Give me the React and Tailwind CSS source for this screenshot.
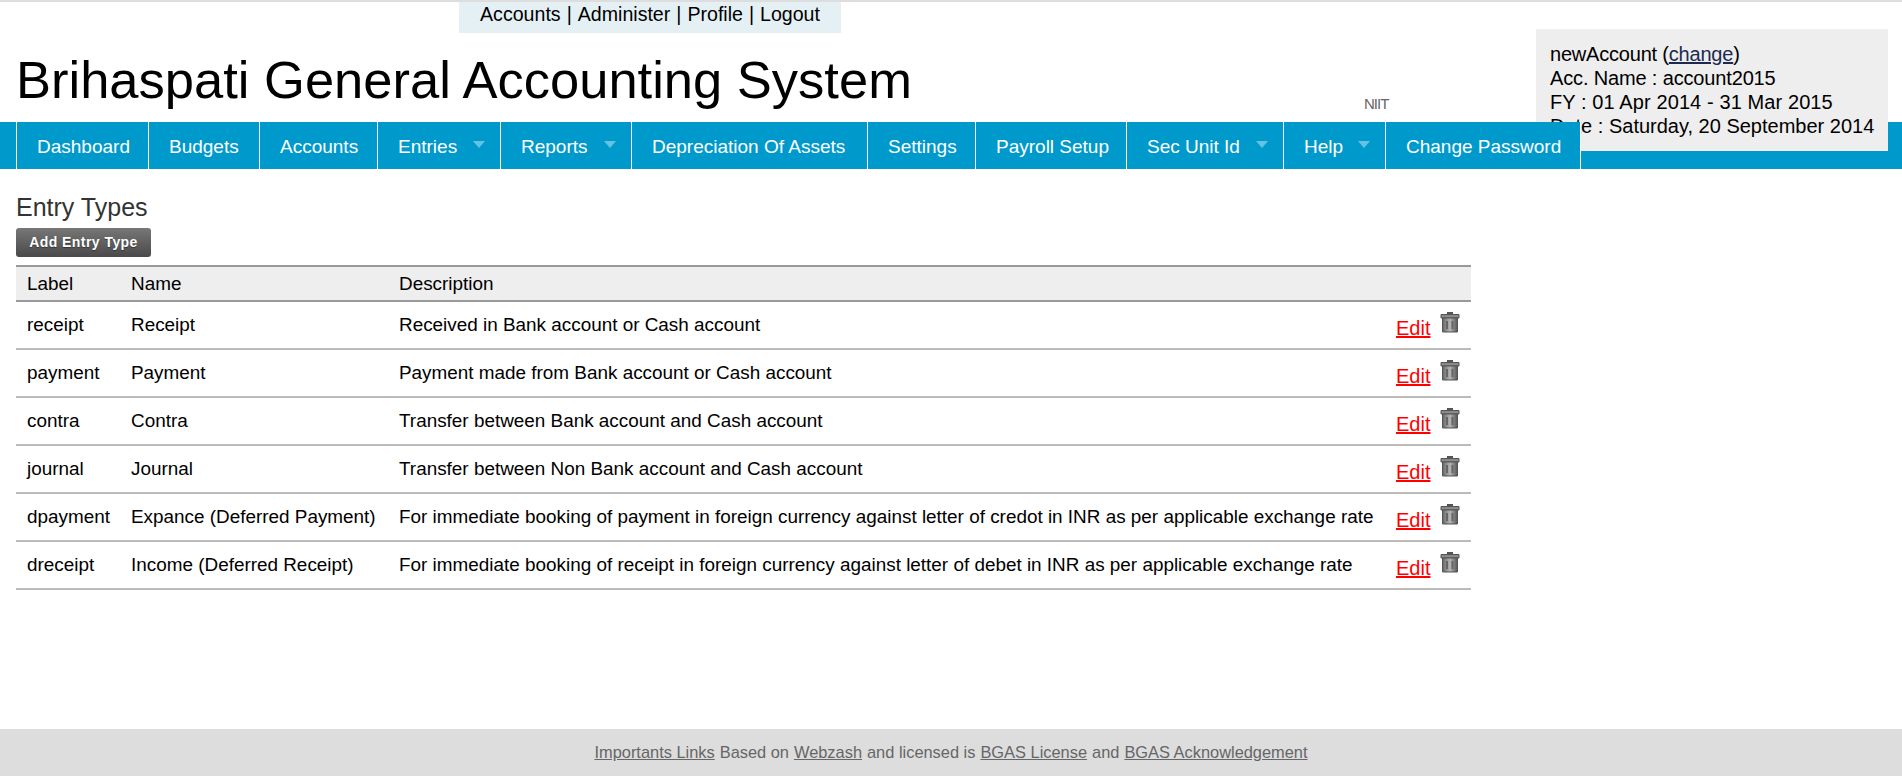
const topLinks = ["Accounts", "Administer", "Profile", "Logout"];

const navItems = [
  { label: "Dashboard", width: "w-[132px]" },
  { label: "Budgets", width: "w-[111px]" },
  { label: "Accounts", width: "w-[118px]" },
  { label: "Entries", width: "w-[123px]", arrow: true },
  { label: "Reports", width: "w-[131px]", arrow: true },
  { label: "Depreciation Of Assets", width: "w-[236px]" },
  { label: "Settings", width: "w-[108px]" },
  { label: "Payroll Setup", width: "w-[151px]" },
  { label: "Sec Unit Id", width: "w-[157px]", arrow: true },
  { label: "Help", width: "w-[102px]", arrow: true },
  { label: "Change Password", width: "w-[196px]" },
];

const entryTypes = [
  ["receipt", "Receipt", "Received in Bank account or Cash account"],
  ["payment", "Payment", "Payment made from Bank account or Cash account"],
  ["contra", "Contra", "Transfer between Bank account and Cash account"],
  ["journal", "Journal", "Transfer between Non Bank account and Cash account"],
  ["dpayment", "Expance (Deferred Payment)", "For immediate booking of payment in foreign currency against letter of credot in INR as per applicable exchange rate"],
  ["dreceipt", "Income (Deferred Receipt)", "For immediate booking of receipt in foreign currency against letter of debet in INR as per applicable exchange rate"],
];

function TrashIcon() {
  return (
    <svg width="20" height="22" viewBox="0 0 20 22" className="block">
      <defs>
        <linearGradient id="trashBody" x1="0" x2="1" y1="0" y2="0">
          <stop offset="0" stopColor="#666" />
          <stop offset="0.5" stopColor="#b5b5b5" />
          <stop offset="1" stopColor="#555" />
        </linearGradient>
      </defs>
      <path d="M7 1h6v2H7z" fill="#555" />
      <path d="M1 3.5h18v3.5H1z" fill="#8a8a8a" stroke="#555" strokeWidth="1" />
      <path d="M2.5 7h15v14h-15z" fill="url(#trashBody)" stroke="#555" strokeWidth="1" />
      <path d="M7 10v8M12.5 10v8" stroke="#666" strokeWidth="2" />
    </svg>
  );
}

export default function App() {
  return (
    <div className="flex min-h-[776px] flex-col border-t-2 border-[#dddddd] bg-white font-['Liberation_Sans',Arial,sans-serif] text-[18.9px] text-black">
      <header className="relative">
        <div className="ml-[459px] flex h-[31px] w-[382px] justify-center gap-[6px] bg-[#e5f0f5] text-[19.6px] leading-[24px]">
          {topLinks.map((link, i) => (
            <span key={link}>
              {link}
              {i < topLinks.length - 1 && <span className="ml-[6px]">|</span>}
            </span>
          ))}
        </div>
        <h1 className="ml-4 mt-[11px] h-[78px] text-[52.5px] font-normal leading-[72px]">
          Brihaspati General Accounting System
        </h1>
        <span className="absolute left-[1364px] top-[92px] text-[15px] leading-5 tracking-[-1px] text-[#666666]">
          NIIT
        </span>
        <div className="absolute left-[1536px] top-[27px] z-10 h-[122px] w-[352px] whitespace-nowrap bg-[#eeeeee] py-[13px] pl-[14px] text-[20px] leading-6">
          <div className="tracking-[-0.2px]">
            newAccount (<a href="#" className="text-[#1c2a50] underline">change</a>)
          </div>
          <div className="tracking-[-0.15px]">Acc. Name : account2015</div>
          <div className="tracking-[0.1px]">FY : 01 Apr 2014 - 31 Mar 2015</div>
          <div>Date : Saturday, 20 September 2014</div>
        </div>
        <nav className="h-[47px] bg-[#0099cc] pl-4">
          <ul className="relative z-20 flex h-full">
            {navItems.map((item) => (
              <li
                key={item.label}
                className={`relative flex h-full items-center border-l border-white bg-[#0099cc] pl-5 pt-[4px] text-[19px] text-white ${item.width} ${item.label === "Change Password" ? "border-r" : ""}`}
              >
                {item.label}
                {item.arrow && (
                  <span className="absolute right-[15px] top-[19px] h-0 w-0 border-x-[6px] border-t-[7px] border-x-transparent border-t-[#66c2e0]" />
                )}
              </li>
            ))}
          </ul>
        </nav>
      </header>

      <main className="flex-1 px-4">
        <h2 className="mt-[23px] text-[25px] font-normal leading-[30px] text-[#333333]">Entry Types</h2>
        <a
          href="#"
          className="mt-[6px] flex h-[29px] w-[135px] items-center justify-center rounded-[3px] bg-gradient-to-b from-[#777777] to-[#4a4a4a] text-[14px] font-bold tracking-[0.45px] text-white [text-shadow:0_1px_1px_#333]"
        >
          Add Entry Type
        </a>
        <table className="mt-2 w-[1455px] table-fixed border-collapse border-t-2 border-[#999999]">
          <thead>
            <tr className="h-[35px] border-b-2 border-[#999999] bg-[#eeeeee] text-left">
              <th className="w-[104px] pl-[11px] pt-[2px] font-normal">Label</th>
              <th className="w-[267px] pl-[11px] pt-[2px] font-normal">Name</th>
              <th className="pl-3 pt-[2px] font-normal">Description</th>
              <th className="w-[90px]" />
            </tr>
          </thead>
          <tbody>
            {entryTypes.map(([label, name, description]) => (
              <tr key={label} className="h-[48px] border-b-2 border-[#bbbbbb]">
                <td className="pl-[11px]">{label}</td>
                <td className="pl-[11px]">{name}</td>
                <td className="pl-3">{description}</td>
                <td>
                  <div className="flex items-start pl-[15px]">
                    <a href="#" className="mt-[5px] text-[20px] leading-6 text-[#ff0000] underline">Edit</a>
                    <span className="ml-[10px]"><TrashIcon /></span>
                  </div>
                </td>
              </tr>
            ))}
          </tbody>
        </table>
      </main>

      <footer className="flex h-[47px] items-center justify-center gap-[5px] bg-[#dddddd] text-[16.4px] text-[#666666]">
        <a href="#" className="underline">Importants Links</a>
        <span>Based on</span>
        <a href="#" className="underline">Webzash</a>
        <span>and licensed is</span>
        <a href="#" className="underline">BGAS License</a>
        <span>and</span>
        <a href="#" className="underline">BGAS Acknowledgement</a>
      </footer>
    </div>
  );
}
